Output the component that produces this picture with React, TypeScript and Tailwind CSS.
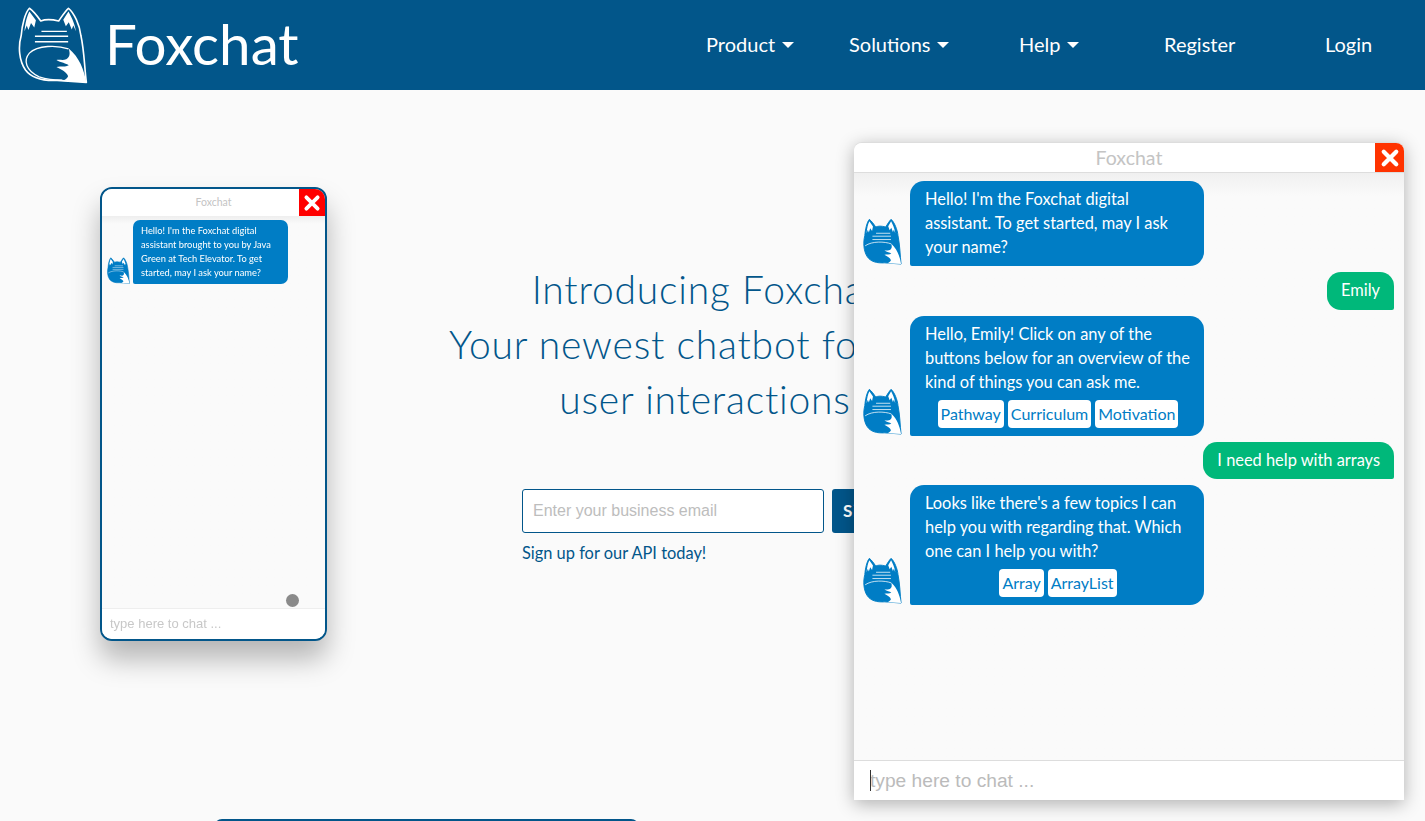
const FONT = "font-['Lato','Open_Sans',sans-serif]"
const HEAD_PATH =
  'M85 17 C72 30 62 70 60 100 C50 135 53 178 73 207 C93 234 125 241 170 239 L260 245 C254 200 254 150 243 100 C240 70 222 30 205 17 C195 25 185 42 175 56 C150 50 135 50 120 56 C110 42 97 25 85 17 Z'
const TAIL_PATH =
  'M260 245 C252 205 240 170 205 140 C212 158 208 168 198 174 C188 178 178 174 168 176 C182 184 198 186 206 192 C196 198 182 194 168 198 C184 206 200 214 204 226 C200 234 194 238 184 241 Z'

// fox mark, outlined for the header and filled for chat avatars
function FoxMark({ variant, className }: { variant: 'outline' | 'filled'; className: string }) {
  const filled = variant === 'filled'

  return (
    <svg viewBox="50 10 215 240" preserveAspectRatio="none" className={className}>
      <path
        d={HEAD_PATH}
        fill={filled ? '#007dc5' : 'none'}
        stroke={filled ? '#007dc5' : '#ffffff'}
        strokeWidth="5"
        strokeLinejoin="round"
      />
      <path d="M85 27 C78 40 72 62 70 88 L77 70 L82 84 L90 62 L100 76 L105 54 Z" fill="#ffffff" />
      <path d="M205 27 C212 40 224 62 228 88 L220 70 L215 82 L206 60 L197 72 L189 52 Z" fill="#ffffff" />
      <path d="M122 88 H200 M102 103 H204 M102 120 H204" stroke="#ffffff" strokeWidth="4" fill="none" />
      {!filled && (
        <path
          d="M205 142 C170 130 110 130 85 155 C65 178 75 210 115 228 C140 236 165 238 186 238"
          stroke="#ffffff"
          strokeWidth="4"
          fill="none"
        />
      )}
      {filled && <path d="M62 152 C100 127 170 130 205 142" stroke="#ffffff" strokeWidth="4" fill="none" />}
      <path d={TAIL_PATH} fill="#ffffff" />
    </svg>
  )
}

function NavItem({ label, hasMenu }: { label: string; hasMenu?: boolean }) {
  return (
    <a className="flex items-center gap-[7px] text-[20px] text-white">
      {label}
      {hasMenu && <span className="mt-[1px] h-0 w-0 border-x-[6px] border-t-[6px] border-x-transparent border-t-white" />}
    </a>
  )
}

function Bot({ children, actions }: { children: React.ReactNode; actions?: string[] }) {
  return (
    <div className="flex items-end gap-[8px] pl-[9px]">
      <FoxMark variant="filled" className="mb-[1px] h-[47px] w-[39px] shrink-0" />
      <div className="w-[294px] rounded-[14px] rounded-bl-[2px] bg-[#007dc5] pb-[7px] pl-[15px] pr-[13px] pt-[6px] text-[16.4px] leading-[24px] text-white">
        {children}
        {actions && (
          <div className="mb-[1px] mt-[6px] flex justify-center gap-[4px]">
            {actions.map((action) => (
              <span key={action} className="flex h-[28px] items-center rounded-[4px] bg-white px-[3px] pb-[1px] text-[16px] text-[#007dc5]">
                {action}
              </span>
            ))}
          </div>
        )}
      </div>
    </div>
  )
}

function User({ text, compact }: { text: string; compact?: boolean }) {
  return (
    <div className="flex justify-end pr-[10px]">
      <div className={`rounded-[14px] rounded-br-[2px] bg-[#00b87a] px-[14px] pt-[6px] text-[16.4px] leading-[24px] text-white ${compact ? 'pb-[7px]' : 'pb-[8px]'}`}>
        {text}
      </div>
    </div>
  )
}

function CloseIcon({ className }: { className: string }) {
  return (
    <svg viewBox="0 0 16 16" className={className}>
      <path d="M3 3 L13 13 M13 3 L3 13" stroke="#ffffff" strokeWidth="3.4" strokeLinecap="round" />
    </svg>
  )
}

export default function App() {
  return (
    <div className={`relative h-[821px] w-[1425px] overflow-hidden bg-[#fafafa] ${FONT}`}>
      <header className="flex h-[90px] items-center bg-[#02568a] pl-[18px]">
        <FoxMark variant="outline" className="h-[78px] w-[70px]" />
        <span className="ml-[17px] pb-[4px] text-[56.5px] leading-none text-white">Foxchat</span>
        <nav className="ml-auto flex items-center pb-[2px]">
          <div className="flex w-[143px]"><NavItem label="Product" hasMenu /></div>
          <div className="flex w-[170px]"><NavItem label="Solutions" hasMenu /></div>
          <div className="flex w-[145px]"><NavItem label="Help" hasMenu /></div>
          <div className="flex w-[161px]"><NavItem label="Register" /></div>
          <div className="flex w-[100px]"><NavItem label="Login" /></div>
        </nav>
      </header>

      <main className="flex items-start pl-[100px] pt-[97px]">
        {/* demo widget */}
        <div className="relative flex h-[454px] w-[227px] shrink-0 flex-col overflow-hidden rounded-[12px] border-2 border-[#02568a] bg-[#fafafa] shadow-[0_18px_28px_rgba(0,0,0,0.28)] blur-[0.3px]">
          <div className="relative flex h-[27px] shrink-0 items-center justify-center bg-white text-[10.5px] text-[#c4c4c4]">
            Foxchat
            <div className="absolute right-0 top-0 flex h-[27px] w-[26px] items-center justify-center bg-[#ff0000]">
              <CloseIcon className="h-[18px] w-[18px]" />
            </div>
          </div>
          <div className="flex-1 bg-gradient-to-b from-[#eeeeee] to-[#fafafa] to-[2%] pt-[4px]">
            <div className="flex items-end gap-[3px] pl-[5px]">
              <FoxMark variant="filled" className="h-[27px] w-[23px]" />
              <div className="w-[155px] rounded-[7px] rounded-bl-[2px] bg-[#007dc5] px-[8px] py-[4px] text-[9.3px] leading-[14px] text-white">
                Hello! I'm the Foxchat digital assistant brought to you by Java Green at Tech Elevator. To get started, may I ask your name?
              </div>
            </div>
          </div>
          <div className="flex h-[31px] shrink-0 items-center border-t border-[#eeeeee] bg-white pl-[8px] font-['Liberation_Sans',sans-serif] text-[13px] text-[#c8c8c8]">
            type here to chat ...
          </div>
          <div className="absolute bottom-[32px] right-[26px] h-[13px] w-[13px] rounded-full bg-[#8a8a8a]" />
        </div>

        {/* hero */}
        <section className="ml-[58px] w-[640px] shrink-0 pt-[75px]">
          <h1 className="text-center text-[39px] font-light leading-[55px] tracking-[0.8px] text-[#02568a]">
            Introducing Foxchat
            <br />
            Your newest chatbot for your
            <br />
            user interactions
          </h1>
          <div className="ml-[137px] mt-[62px] flex gap-[8px]">
            <input
              placeholder="Enter your business email"
              className="h-[44px] w-[302px] rounded-[3px] border border-[#02568a] bg-white px-[10px] font-['Liberation_Sans',sans-serif] text-[16px] outline-none placeholder:text-[#bdbdbd]"
            />
            <button className="h-[44px] rounded-[3px] bg-[#02568a] px-[11px] text-[17px] font-bold tracking-[1px] text-white">Sign up</button>
          </div>
          <p className="ml-[137px] mt-[8px] text-[16.4px] leading-[24px] text-[#02568a]">Sign up for our API today!</p>
        </section>
      </main>

      {/* next section peeking in at the fold */}
      <div className="absolute left-[214px] top-[819px] h-[10px] w-[425px] rounded-t-[8px] bg-[#02568a]" />

      {/* open chat window */}
      <aside className="absolute left-[854px] top-[142px] flex h-[658px] w-[550px] flex-col rounded-t-[8px] border-t border-[#dddddd] bg-[#fafafa] shadow-[0_4px_18px_rgba(0,0,0,0.3)]">
        <div className="relative flex h-[30px] shrink-0 items-center justify-center rounded-t-[8px] border-b border-[#dddddd] bg-white text-[19.5px] text-[#c4c4c4]">
          Foxchat
          <div className="absolute right-0 top-0 flex h-[29px] w-[29px] items-center justify-center rounded-tr-[8px] bg-[#ff3300]">
            <CloseIcon className="h-[20px] w-[20px]" />
          </div>
        </div>
        <div className="flex flex-1 flex-col gap-[6px] bg-gradient-to-b from-[#f0f0f0] to-[#fafafa] to-[4%] pt-[8px]">
          <Bot>
            Hello! I'm the Foxchat digital
            <br />
            assistant. To get started, may I ask your name?
          </Bot>
          <User text="Emily" />
          <Bot actions={['Pathway', 'Curriculum', 'Motivation']}>
            Hello, Emily! Click on any of the buttons below for an overview of the kind of things you can ask me.
          </Bot>
          <User text="I need help with arrays" compact />
          <Bot actions={['Array', 'ArrayList']}>
            Looks like there's a few topics I can help you with regarding that. Which one can I help you with?
          </Bot>
        </div>
        <div className="relative h-[40px] shrink-0 border-t border-[#dddddd] bg-white">
          <input
            placeholder="type here to chat ..."
            className="h-full w-full bg-transparent pl-[16px] font-['Liberation_Sans',sans-serif] text-[19.2px] outline-none placeholder:text-[#bbbbbb]"
          />
          <span className="absolute left-[16px] top-[9px] h-[21px] w-[1px] bg-[#333333]" />
        </div>
      </aside>
    </div>
  )
}
